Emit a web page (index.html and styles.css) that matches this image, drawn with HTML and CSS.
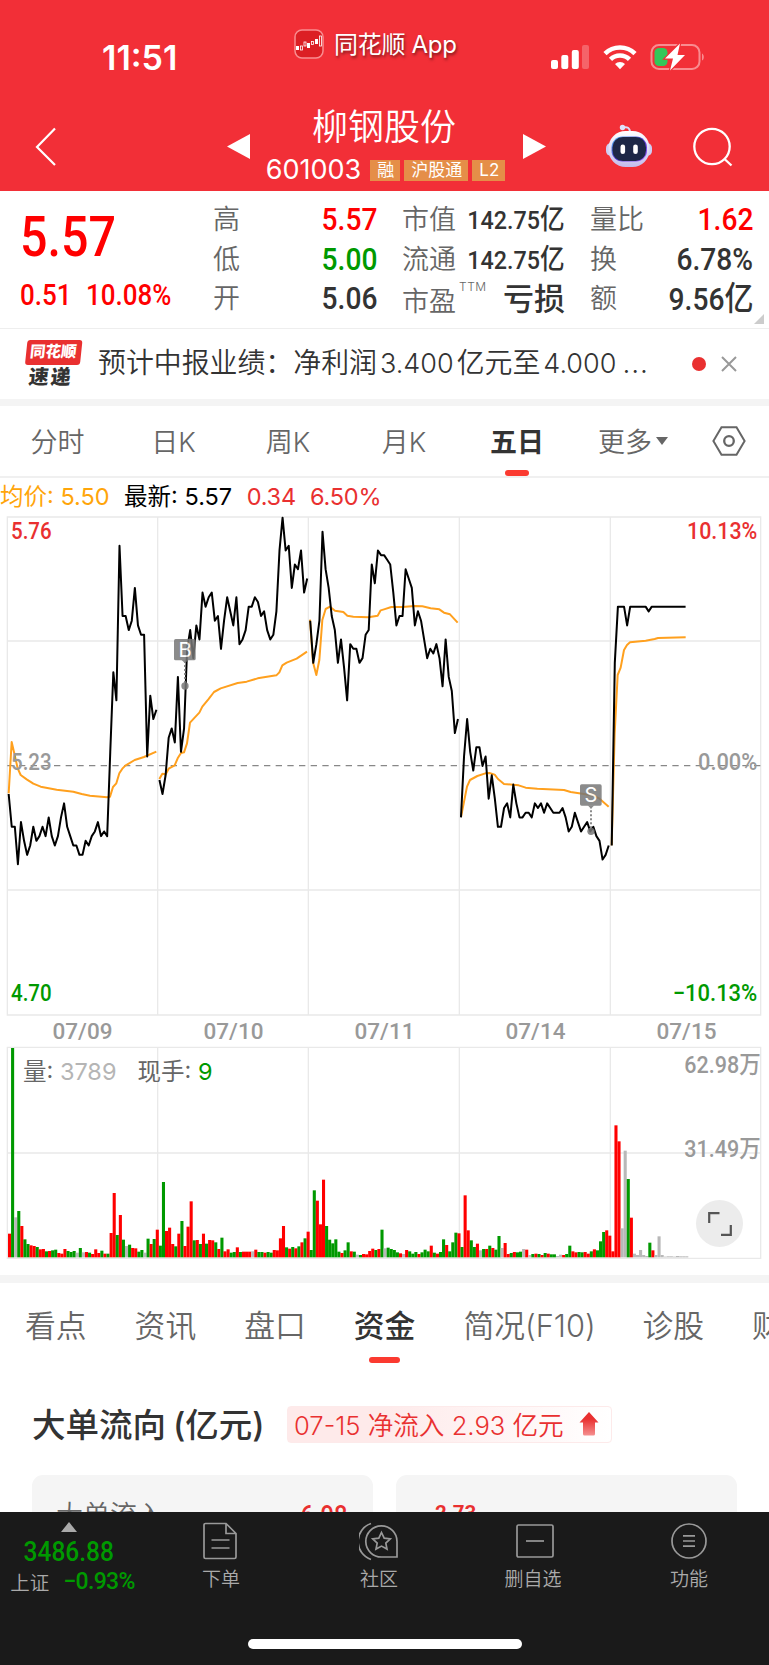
FILE: index.html
```html
<!DOCTYPE html>
<html lang="zh-CN">
<head>
  <meta charset="UTF-8">
  <meta name="viewport" content="width=device-width, initial-scale=1.0">
  <title>柳钢股份 601003</title>
  <link rel="stylesheet" href="styles.css">
</head>
<body>
  <!-- Header -->
  <header class="header">
    <div class="status-bar">
      <span class="time">11:51</span>
      <div class="app-name">
        <svg width="30" height="30" viewBox="0 0 30 30">
          <rect x="1" y="1" width="28" height="28" rx="7" fill="#dc1f24" stroke="#f98d90" stroke-width="1.5"/>
          <g fill="#fff">
            <rect x="2" y="17" width="3" height="4"/><rect x="13" y="14" width="3" height="5"/><rect x="21" y="10" width="3" height="5"/>
          </g>
          <g fill="none" stroke="#fff" stroke-width=".8">
            <rect x="6.400" y="17" width="2" height="4"/><rect x="10" y="13" width="2" height="4"/><rect x="17.400" y="12.500" width="2" height="3"/><rect x="25.500" y="7" width="2" height="10"/>
          </g>
        </svg>
        <span>同花顺 App</span>
      </div>
      <div class="status-icons">
        <svg width="38" height="26" viewBox="0 0 38 26" fill="#fff">
          <rect x="0" y="16" width="7" height="9" rx="2"/>
          <rect x="10.300" y="11" width="7" height="14" rx="2"/>
          <rect x="20.800" y="6" width="7" height="19" rx="2"/>
          <rect x="31" y="1" width="7" height="24" rx="2" opacity=".25"/>
        </svg>
        <svg width="34" height="26" viewBox="0 0 34 26" fill="none" stroke="#fff" stroke-width="4.600">
          <path d="M2 9.600a21.500 21.500 0 0 1 30 0"/>
          <path d="M7.500 15.400a13.500 13.500 0 0 1 19 0"/>
          <path d="M17 25.200l-5-5.200a7 7 0 0 1 10 0z" fill="#fff" stroke="none"/>
        </svg>
        <svg width="55" height="28" viewBox="0 0 55 28">
          <rect x="1.500" y="2" width="48" height="24" rx="7.500" fill="none" stroke="#f98c90" stroke-width="2"/>
          <path d="M52 10.500c2.400 1 2.400 6 0 7z" fill="#f98c90"/>
          <rect x="4.500" y="5" width="13" height="18" rx="4.500" fill="#34c759"/>
          <path d="M30 .5L15 15.500h8L20 27.500 35 12h-7.500z" fill="#fff" stroke="#f22f37" stroke-width="2.400" paint-order="stroke"/>
        </svg>
      </div>
    </div>
    <div class="nav">
      <svg class="back" width="22" height="40" viewBox="0 0 22 40"><path d="M20 1.500L2 20l18 18" fill="none" stroke="#fff" stroke-width="2.200"/></svg>
      <svg class="prev" width="23" height="25" viewBox="0 0 23 25"><path d="M0 12.500L23 0v25z" fill="#fff"/></svg>
      <div class="stock">
        <h1>柳钢股份</h1>
        <div class="stock-code">
          <span class="code">601003</span>
          <span class="tag">融</span>
          <span class="tag">沪股通</span>
          <span class="tag">L2</span>
        </div>
      </div>
      <svg class="next" width="23" height="25" viewBox="0 0 23 25"><path d="M23 12.500L0 0v25z" fill="#fff"/></svg>
      <svg class="robot" width="48" height="44" viewBox="0 0 48 44">
        <defs>
          <linearGradient id="head" x1="0" y1="0" x2="0" y2="1"><stop offset="0" stop-color="#fff"/><stop offset="1" stop-color="#c3bcec"/></linearGradient>
          <linearGradient id="visor" x1="0" y1="0" x2="1" y2="1"><stop offset="0" stop-color="#5cc6ff"/><stop offset=".5" stop-color="#4a35c9"/><stop offset="1" stop-color="#a05cff"/></linearGradient>
        </defs>
        <path d="M18 3.500c4-1 7 0 7 5" fill="none" stroke="#dcdcf8" stroke-width="2"/>
        <circle cx="17.500" cy="3.500" r="2.700" fill="#dfe2fa"/>
        <rect x="1" y="19" width="46" height="13" rx="5" fill="#cfcdf3"/>
        <rect x="3.500" y="7" width="41" height="36" rx="17" fill="url(#head)"/>
        <rect x="6.500" y="12.500" width="35.500" height="25" rx="11" fill="url(#visor)"/>
        <rect x="7.500" y="13" width="33.500" height="24" rx="10.500" fill="#1d2746"/>
        <rect x="15.500" y="20.500" width="4.600" height="9.500" rx="2.300" fill="#fff"/>
        <rect x="28.200" y="20.500" width="4.600" height="9.500" rx="2.300" fill="#fff"/>
      </svg>
      <svg class="search" width="40" height="40" viewBox="0 0 40 40" fill="none" stroke="#fff" stroke-width="2.300"><circle cx="19" cy="19.500" r="17.700"/><path d="M31 31.500l7.500 7"/></svg>
    </div>
  </header>

  <!-- Quote -->
  <section class="quote">
    <div class="price-block up">
      <div class="price din">5.57</div>
      <div class="change"><span class="din">0.51</span><span class="din">10.08%</span></div>
    </div>
    <div class="col col-a">
      <p><label>高</label><b class="din up">5.57</b></p>
      <p><label>低</label><b class="din down">5.00</b></p>
      <p><label>开</label><b class="din">5.06</b></p>
    </div>
    <div class="col col-b">
      <p><label>市值</label><b class="din small">142.75<i>亿</i></b></p>
      <p><label>流通</label><b class="din small">142.75<i>亿</i></b></p>
      <p><label class="pe">市盈<sup>TTM</sup></label><b class="loss">亏损</b></p>
    </div>
    <div class="col col-c">
      <p><label>量比</label><b class="din up">1.62</b></p>
      <p><label>换</label><b class="din">6.78%</b></p>
      <p><label>额</label><b class="din">9.56<i>亿</i></b></p>
    </div>
    <span class="corner"></span>
  </section>

  <!-- News -->
  <section class="news">
    <div class="news-logo">
      <span class="logo-top">同花顺</span>
      <span class="logo-bottom">速递</span>
    </div>
    <p class="news-text">预计中报业绩：净利润<em>3.400</em>亿元至<em>4.000</em><span class="dots">...</span></p>
    <span class="dot"></span>
    <svg width="16" height="16" viewBox="0 0 16 16" stroke="#999" stroke-width="2"><path d="M1 1l14 14M15 1L1 15"/></svg>
  </section>

  <!-- Period tabs -->
  <nav class="period-tabs">
    <a>分时</a>
    <a>日K</a>
    <a>周K</a>
    <a>月K</a>
    <a class="active">五日</a>
    <a class="more">更多<span></span></a>
    <a><svg width="34" height="30" viewBox="0 0 34 30" fill="none" stroke="#666" stroke-width="2"><path d="M9.500 1.200h15L32.600 15l-8.100 13.800h-15L1.400 15z"/><circle cx="17" cy="15" r="4.800" stroke-width="2.300"/></svg></a>
  </nav>

  <div class="legend">
    <span class="avg">均价: 5.50</span>
    <span class="last">最新: 5.57</span>
    <span class="red">0.34</span>
    <span class="red">6.50%</span>
  </div>

  <!-- Five day chart, 3 units per pixel -->
  <svg class="chart" width="769" height="500" viewBox="0 348 2307 1500">
    <path class="grid" d="M22 351H2282V1845H22zM473 351V1845M925 351V1845M1378 351V1845M1831 351V1845M22 723H2282M22 1470H2282"/>
    <path class="zero" d="M22 1097H2282"/>
    <g id="lines"></g>
    <g class="marker">
      <path d="M555 783V850" class="stem"/>
      <circle cx="555" cy="858" r="11"/>
      <rect x="522" y="717" width="65" height="64" rx="5"/><path d="M545 780h20l-10 10z"/>
      <text x="555" y="770">B</text>
    </g>
    <g class="marker">
      <path d="M1773 1219V1290" class="stem"/>
      <circle cx="1773" cy="1294" r="11"/>
      <rect x="1740" y="1153" width="65" height="64" rx="5"/><path d="M1763 1216h20l-10 10z"/>
      <text x="1773" y="1207">S</text>
    </g>
    <g class="axis">
      <text class="t-red" x="33" y="417" textLength="122" lengthAdjust="spacingAndGlyphs">5.76</text>
      <text class="t-grey" x="33" y="1110" textLength="122" lengthAdjust="spacingAndGlyphs">5.23</text>
      <text class="t-green" x="33" y="1804" textLength="122" lengthAdjust="spacingAndGlyphs">4.70</text>
      <text class="t-red" x="2061" y="417" textLength="211" lengthAdjust="spacingAndGlyphs">10.13%</text>
      <text class="t-grey" x="2094" y="1110" textLength="178" lengthAdjust="spacingAndGlyphs">0.00%</text>
      <text class="t-green" x="2018" y="1804" textLength="254" lengthAdjust="spacingAndGlyphs">−10.13%</text>
    </g>
  </svg>

  <div class="dates">
    <span>07/09</span><span>07/10</span><span>07/11</span><span>07/14</span><span>07/15</span>
  </div>

  <!-- Volume -->
  <div class="volume">
    <svg width="769" height="215" viewBox="0 45 2307 645">
      <path class="grid" d="M22 52H2282V685H22zM473 52V685M925 52V685M1378 52V685M1831 52V685M22 369H2282"/>
      <g id="bars"></g>
      <g class="axis">
        <text class="t-grey" x="2053" y="129" textLength="229" lengthAdjust="spacingAndGlyphs">62.98万</text>
        <text class="t-grey" x="2053" y="382" textLength="229" lengthAdjust="spacingAndGlyphs">31.49万</text>
      </g>
    </svg>
    <div class="volume-info">量: <span class="grey">3789</span><span class="hand">现手: <span class="down">9</span></span></div>
    <div class="expand">
      <svg width="24" height="24" viewBox="0 0 24 24" fill="none" stroke="#555" stroke-width="2.200"><path d="M1.200 11V1.200H11.500M13 22.800h9.800V13"/></svg>
    </div>
  </div>

  <!-- Info tabs -->
  <nav class="info-tabs">
    <a>看点</a>
    <a>资讯</a>
    <a>盘口</a>
    <a class="active">资金</a>
    <a class="f10">简况(F10)</a>
    <a>诊股</a>
    <a>财务</a>
  </nav>

  <section class="flow">
    <div class="flow-title">
      <h2>大单流向 (亿元)</h2>
      <div class="badge">
        <span>07-15 净流入 2.93 亿元</span>
        <svg width="20" height="24" viewBox="0 0 20 24">
          <defs><linearGradient id="arrow" x1="0" y1="0" x2="0" y2="1"><stop offset=".3" stop-color="#e93030"/><stop offset="1" stop-color="#f58f8f"/></linearGradient></defs>
          <path d="M10 0l9.500 10.500H16V22a1.500 1.500 0 0 1-1.500 1.500h-9A1.500 1.500 0 0 1 4 22V10.500H.5z" fill="url(#arrow)"/>
        </svg>
      </div>
    </div>
    <div class="cards">
      <div class="card"><span>大单流入</span><b class="din">6.98</b></div>
      <div class="card bar-card"><b>2.73</b></div>
    </div>
  </section>

  <!-- Bottom bar -->
  <footer class="footer">
    <div class="tools">
      <div class="index">
        <i class="tri"></i>
        <span class="index-value">3486.88</span>
        <div class="index-row"><span>上证</span><b>−0.93%</b></div>
      </div>
      <div class="tool doc">
        <svg width="40" height="40" viewBox="0 0 40 40"><path d="M5.500 2.500H26L36 12.500V36a1.500 1.500 0 0 1-1.500 1.500h-29A1.500 1.500 0 0 1 4 36V4a1.500 1.500 0 0 1 1.500-1.500zM26 2.500V12.500H36M11.500 19H29.500M11.500 27H29.500"/></svg>
        <span>下单</span>
      </div>
      <div class="tool">
        <svg width="40" height="40" viewBox="0 0 40 40"><path d="M12 2.500A19 19 0 0 0 12 38.500M23 36H38V20.500A15.600 15.600 0 1 0 23 36z"/><path d="M22.500 11.500l2.700 5.600 6.100.8-4.500 4.200 1.200 6-5.500-3-5.500 3 1.200-6-4.500-4.200 6.100-.8z"/></svg>
        <span>社区</span>
      </div>
      <div class="tool remove">
        <svg width="40" height="40" viewBox="0 0 40 40"><rect x="2" y="4" width="36" height="32" rx="1.500"/><path d="M11 20H29"/></svg>
        <span>删自选</span>
      </div>
      <div class="tool">
        <svg width="40" height="40" viewBox="0 0 40 40"><circle cx="20" cy="20" r="17"/><path d="M14 14.800H26M14 20H26M14 25.200H26"/></svg>
        <span>功能</span>
      </div>
    </div>
    <div class="home-bar"></div>
  </footer>

  <script src="chart.js"></script>
</body>
</html>
```
FILE: styles.css
```css
* {
  box-sizing: border-box;
}
body {
  margin: 0;
  width: 769px;
  height: 1665px;
  overflow: hidden;
  background: #fff;
  color: #333;
  font-family: Inter, "Noto Sans CJK SC", sans-serif;
}
h1, h2, p {
  margin: 0;
  font-weight: normal;
}
svg {
  display: block;
  flex: none;
}
i, em {
  font-style: normal;
}
.din {
  display: inline-block;
  font-family: Roboto, "Noto Sans CJK SC", sans-serif;
  font-weight: 500;
  white-space: nowrap;
  transform: scaleX(0.88);
  transform-origin: right;
}
.up {
  color: #ff0000 !important;
}
.down {
  color: #009900 !important;
}

/* header */
.header {
  height: 191px;
  background: #f22f37;
  color: #fff;
}
.status-bar {
  display: flex;
  height: 100px;
}
.time {
  width: 192px;
  padding: 38px 0 0 102px;
  font-size: 34px;
  line-height: 40px;
  font-weight: 600;
}
.app-name {
  display: flex;
  width: 250px;
  margin-left: 102px;
  padding-top: 29px;
  font-size: 24px;
  line-height: 32px;
  text-shadow: 1px 2px 3px rgba(0, 0, 0, 0.5);
}
.app-name span {
  margin-left: 10px;
  white-space: nowrap;
  letter-spacing: -0.3px;
}
.status-icons {
  display: flex;
  gap: 14px;
  margin-left: 7px;
  padding-top: 44px;
}
.status-icons svg:last-child {
  margin: -1px 0 0 -1px;
}
.nav {
  display: flex;
  height: 91px;
}
.back {
  margin: 27px 0 0 35px;
}
.prev {
  margin: 34px 0 0 170px;
}
.stock {
  width: 273px;
  text-align: center;
}
.stock h1 {
  font-size: 36px;
  font-weight: 350;
  line-height: 44px;
  padding: 5px 5px 0 0;
}
.stock-code {
  display: flex;
  justify-content: center;
  align-items: center;
  gap: 4px;
  height: 24px;
  margin: 9px 2px 0 0;
}
.code {
  font-size: 27px;
  line-height: 24px;
  margin-right: 5px;
}
.tag {
  height: 21px;
  padding: 0 6px 0 7px;
  background: #e58e48;
  font-size: 17px;
  line-height: 21px;
}
.next {
  margin-top: 34px;
}
.robot {
  margin: 24px 0 0 59px;
}
.search {
  margin: 27px 0 0 40px;
}

/* quote */
.quote {
  position: relative;
  display: flex;
  height: 138px;
  border-bottom: 1px solid #eee;
}
.price-block {
  width: 213px;
  padding-left: 20px;
}
.price-block .din {
  transform-origin: left;
}
.price {
  height: 66px;
  margin-top: 13px;
  font-size: 55px;
  line-height: 66px;
}
.change {
  display: flex;
  margin-top: 7px;
  font-size: 29.5px;
  line-height: 36px;
}
.change .din {
  width: 66px;
}
.col {
  padding-top: 9px;
}
.col p {
  display: flex;
  justify-content: space-between;
  height: 39.600px;
  line-height: 39.600px;
  white-space: nowrap;
}
.col label {
  color: #666;
  font-size: 27px;
  font-weight: 350;
}
.col b {
  font-size: 32px;
}
.col b.small {
  margin-left: -20px;
  font-size: 26.5px;
}
.col i {
  font-size: 33px;
}
.col .small i {
  font-size: 28px;
}
.col-a {
  width: 164px;
}
.col-b {
  width: 163px;
  margin-left: 25px;
}
.col-c {
  width: 163px;
  margin-left: 25px;
}
.pe {
  position: relative;
  top: 3px;
}
.pe sup {
  position: absolute;
  left: 57px;
  top: -5px;
  font-size: 12px;
  line-height: 20px;
  letter-spacing: 0.5px;
}
.col b.loss {
  font-size: 31px;
  font-weight: 500;
}
.corner {
  position: absolute;
  right: 5px;
  bottom: 4px;
  border-left: 10px solid transparent;
  border-bottom: 10px solid #ccc;
}

/* news */
.news {
  display: flex;
  align-items: center;
  height: 76.500px;
  padding: 0 33px 0 24px;
  border-bottom: 7px solid #f4f4f4;
}
.news-logo {
  display: flex;
  flex: none;
  flex-direction: column;
  align-items: center;
  width: 56px;
  height: 48px;
  margin-right: 2px;
  font-weight: 900;
  transform: skewX(-6deg);
}
.logo-top {
  width: 55px;
  height: 25px;
  border-radius: 3px;
  background: #e93030;
  color: #fff;
  font-size: 15.5px;
  line-height: 24px;
  text-align: center;
}
.logo-bottom {
  margin-top: 1px;
  font-size: 20px;
  line-height: 22px;
  letter-spacing: 2px;
}
.news-text {
  flex: none;
  width: 593px;
  padding-left: 16px;
  font-size: 27.900px;
  font-weight: 350;
  line-height: 40px;
  white-space: nowrap;
}
.news-text em {
  padding: 0 3px 0 3px;
  font-size: 27px;
}
.dots {
  margin-left: 3px;
  letter-spacing: 1px;
}
.dot {
  flex: none;
  width: 14px;
  height: 14px;
  margin: 0 15px 0 17px;
  border-radius: 50%;
  background: #e93030;
}

/* period tabs */
.period-tabs {
  display: grid;
  grid-template-columns: 115px 117px 112px 120px 106px 126px 66px;
  height: 72.500px;
  border-bottom: 2px solid #f0f0f0;
}
.period-tabs a {
  position: relative;
  display: flex;
  justify-content: center;
  align-items: center;
  color: #666;
  font-size: 27px;
  font-weight: 350;
}
.period-tabs .active {
  color: #333;
  font-weight: 700;
}
.active::after {
  content: "";
  position: absolute;
  left: 50%;
  bottom: 0;
  width: 24px;
  height: 6px;
  margin-left: -12px;
  border-radius: 3px;
  background: #fb3a30;
}
.more span {
  margin-left: 4px;
  border: 6px solid transparent;
  border-top: 8px solid #666;
  border-bottom: 0;
}
.legend {
  display: flex;
  height: 38px;
  font-size: 23.500px;
  line-height: 38px;
  white-space: nowrap;
}
.legend span {
  margin-right: 14.5px;
}
.legend .red {
  margin-right: 14px;
  letter-spacing: -0.2px;
}
.avg {
  color: #ffa50a;
}
.last {
  color: #000;
}
.red {
  color: #e93030;
}

/* chart */
.grid {
  fill: none;
  stroke: #e9e9e9;
  stroke-width: 4;
}
.zero {
  fill: none;
  stroke: #888;
  stroke-width: 3.5;
  stroke-dasharray: 19 16;
}
.price-line, .avg-line {
  fill: none;
  stroke: #000;
  stroke-width: 6;
  stroke-linejoin: round;
}
.avg-line {
  stroke: #ffa01e;
}
.marker {
  fill: #777;
  opacity: 0.85;
}
.marker .stem {
  stroke: #777;
  stroke-width: 6;
  stroke-dasharray: 6 6;
}
.marker text {
  fill: #fff;
  font-size: 60px;
  text-anchor: middle;
}
.axis {
  font-family: Roboto, "Noto Sans CJK SC", sans-serif;
  font-size: 70px;
  font-weight: 500;
}
.t-red { fill: #e93030; }
.t-green { fill: #009900; }
.t-grey { fill: #999; }
.dates {
  display: flex;
  height: 29px;
  padding-left: 7px;
  color: #999;
  font-family: Roboto, sans-serif;
  font-size: 22.500px;
  font-weight: 500;
  line-height: 30px;
}
.dates span {
  width: 151px;
  text-align: center;
}
.volume {
  position: relative;
  height: 238px;
  border-bottom: 8px solid #f4f4f4;
}
.volume-info {
  position: absolute;
  left: 23px;
  top: 11px;
  color: #666;
  font-size: 23.5px;
  line-height: 32px;
}
.grey {
  color: #b5b5b5;
}
.hand {
  margin-left: 21px;
}
.expand {
  position: absolute;
  left: 696px;
  top: 155px;
  display: flex;
  justify-content: center;
  align-items: center;
  width: 47px;
  height: 47px;
  border-radius: 50%;
  background: #ececec;
}

/* info tabs */
.info-tabs {
  display: flex;
  gap: 48px;
  height: 80px;
  padding-left: 25px;
  overflow: hidden;
}
.info-tabs a {
  position: relative;
  flex: none;
  color: #666;
  font-size: 30.800px;
  font-weight: 350;
  line-height: 86px;
  white-space: nowrap;
}
.info-tabs .active {
  color: #333;
  font-weight: 500;
}
.info-tabs .active::after {
  width: 31px;
  margin-left: -16px;
}
.info-tabs .f10 {
  width: 131px;
}
.flow {
  height: 149px;
  padding: 0 32px;
  overflow: hidden;
}
.flow-title {
  display: flex;
  padding-top: 43px;
}
.flow h2 {
  width: 255px;
  height: 40px;
  font-size: 33.5px;
  font-weight: 500;
  line-height: 38px;
  word-spacing: -2px;
  white-space: nowrap;
}
.badge {
  display: flex;
  align-items: center;
  gap: 15px;
  width: 325px;
  height: 37px;
  padding: 0 0 2px 6px;
  border: 1px solid #fdeaea;
  border-radius: 4px;
  background: linear-gradient(90deg, #feeaea 30%, #fff);
  color: #e93030;
  font-size: 25.600px;
  font-weight: 350;
  white-space: nowrap;
}
.cards {
  display: flex;
  gap: 23px;
  margin-top: 29px;
}
.card {
  display: flex;
  justify-content: space-between;
  width: 341px;
  height: 100px;
  padding: 23px 25px;
  border-radius: 11px;
  background: #f5f5f5;
  color: #666;
  font-size: 27px;
  font-weight: 350;
  line-height: 36px;
}
.card span {
  margin-left: -1px;
}
.card b {
  color: #e93030;
  font-family: Roboto, sans-serif;
  font-weight: 500;
}
.bar-card {
  padding: 20px 39px;
}
.bar-card b {
  font-size: 20.5px;
  font-weight: 700;
}

/* footer */
.footer {
  height: 153px;
  background: #1a1a1a;
  color: #aaa;
}
.tools {
  display: grid;
  grid-template-columns: 137px 168px 148px 160px 152px;
  height: 127px;
}
.index {
  display: flex;
  flex-direction: column;
  align-items: center;
}
.tri {
  margin-top: 10px;
  border: 8.500px solid transparent;
  border-bottom: 10px solid #aaa;
  border-top: 0;
}
.index-value {
  margin-top: 5px;
  color: #009900;
  font-family: Roboto, sans-serif;
  font-size: 27.5px;
  font-weight: 500;
  line-height: 30px;
  transform: scaleX(0.89);
}
.index-row {
  display: flex;
  align-items: center;
  gap: 14px;
  margin-left: 8px;
  height: 28px;
  font-size: 19.5px;
  font-weight: 350;
}
.index-row b {
  color: #009900;
  font-family: Roboto, sans-serif;
  font-size: 23px;
  font-weight: 500;
  letter-spacing: -0.7px;
}
.tool {
  display: flex;
  flex-direction: column;
  align-items: center;
  padding-top: 9px;
  font-size: 19px;
  font-weight: 350;
  line-height: 28px;
}
.tool svg {
  fill: none;
  stroke: #999;
  stroke-width: 1.700;
}
.tool span {
  margin-top: 5px;
}
.tool.doc svg {
  margin-left: -2px;
}
.tool.remove svg {
  margin-left: 4px;
}
.home-bar {
  width: 274px;
  height: 10px;
  margin: 0 auto;
  border-radius: 5px;
  background: #fff;
}
```
FILE: chart.js
```js
// five minute prices of each day, in cents
const prices = [
  [517,510,510,502,511,507,504,506,510,507,508,510,508,512,508,506,508,512,515,510,508,506,506,504,504,507,506,508,509,511,508,509,508,526,543,537,570,555,555,552,554,561,553,551,551,525,538,533,535],
  [520,517,521,529,531,528,542,526,531,548,552,546,553,550,560,557,559,560,554,555,548,554,559,556,553,559,549,550,552,557,557,559,558,555,556,552,550,551,556,569,576,569,570,561,566,565,569,560,563],
  [554,545,549,554,573,565,561,555,552,545,550,544,537,549,548,548,545,546,551,552,566,562,569,568,568,567,566,560,553,555,555,565,563,561,553,556,554,550,546,548,547,549,546,540,550,542,539,530,533],
  [512,525,533,526,522,527,527,523,525,516,521,516,510,510,514,515,512,519,515,512,512,513,513,512,515,514,515,513,515,514,513,513,513,514,512,509,510,513,511,509,510,511,509,510,508,507,503,504,506],
  [506,545,557,557,557,553,557,557,557,557,557,557,556,557,557,557,557,557,557,557,557,557,557,557,557]
];

// average price lines
const averages = [
  '26,1180 35,1026 44,1065 53,1105 62,1125 80,1138 100,1151 122,1160 170,1169 220,1175 245,1182 270,1187 321,1192 330,1190 339,1161 349,1150 358,1120 367,1106 376,1097 404,1080 432,1071 469,1055',
  '478,1137 487,1121 497,1123 506,1106 524,1096 533,1075 543,1059 552,1057 561,1030 570,968 598,938 607,920 625,898 642,876 662,865 713,849 740,845 773,835 829,826 838,817 847,796 860,788 890,776 921,755',
  '930,659 939,787 949,825 958,780 967,660 977,627 990,620 1005,632 1030,636 1042,647 1060,650 1105,652 1133,647 1142,631 1152,628 1174,621 1207,621 1244,618 1267,619 1292,625 1318,628 1332,638 1350,643 1373,668',
  '1383,1251 1401,1160 1410,1140 1432,1128 1456,1120 1468,1119 1484,1124 1494,1137 1504,1145 1512,1152 1556,1156 1577,1163 1612,1166 1692,1170 1712,1176 1752,1182 1780,1187 1797,1195 1826,1220',
  '1835,1336 1844,1000 1853,825 1862,803 1872,750 1881,735 1890,727 1937,722 1964,717 1974,714 2057,712'
];

// volume bars: colour + top edge
const volumes = `
R611 G54 X562 G543 R588 G628 G642 R646 R648 G651 R658 R657 G664 R663 G661 G659 R669 R671 R657 G663 G666 G663 X668 G654 X667
R666 G668 R672 R658 R669 G662 R671 G671 R609 R489 G615 R555 G629 X648 G644 R654 R655 G665 G660 X668 G626 R642 G627 R599
G647 G456 R603 R593 R642 G649 R611 G573 R648 R590 R514 G631 R630 G642 R611 G641 R630 R631 G637 R657 G623 R664 R658 G668 G666
R652 G666 R665 R665 R665 X664 R659 G666 G666 R668 G666 G668 R660 R661 R625 R588 G652 R656 G651 R655 G649 R637 G625 R605
G660 G481 R512 R583 R449 G588 G629 G640 G628 G665 R669 G661 G637 R664 G665 X674 G675 R672 R673 R663 R656 G660 R657 G599 X655
G653 G657 G660 G667 R670 X672 R660 G664 G671 G666 R672 G667 G659 G664 R647 G668 R671 G666 G628 R645 G664 G637 G608 R610
G651 R496 R601 G631 G651 R641 X661 G657 R657 G647 R654 G659 G618 X654 R639 R672 G669 R666 G667 G665 X657 R659 X675 G672 R671
G672 R675 G669 R671 G673 G673 X678 X674 R675 G672 G647 R664 R667 G666 G667 R666 R671 G664 R658 G661 G634 G606 R601 R617
R664 R286 R334 X595 X362 G447 R563 X671 X675 X660 X675 X678 G638 R661 X675 X619 X675 X680 X679 X679 X680 X678 X679 X679 X679
`.trim().split(/\s+/);

const colors = { R: '#ff0000', G: '#009900', X: '#b8b8b8' };
const step = 9.235;

let lines = '';
averages.forEach(points => {
  lines += `<polyline class="avg-line" points="${points}"/>`;
});
prices.forEach((day, d) => {
  const points = day.map((p, i) => {
    const x = 26 + d * 452.3 + i * step;
    const y = 353 + (576 - p) * 14.05;
    return `${x.toFixed(1)},${y.toFixed(1)}`;
  });
  lines += `<polyline class="price-line" points="${points.join(' ')}"/>`;
});
document.getElementById('lines').innerHTML = lines;

document.getElementById('bars').innerHTML = volumes.map((v, i) => {
  const top = Number(v.slice(1));
  return `<rect x="${(24 + i * step).toFixed(1)}" y="${top}" width="${step}" height="${682 - top}" fill="${colors[v[0]]}"/>`;
}).join('');
```
